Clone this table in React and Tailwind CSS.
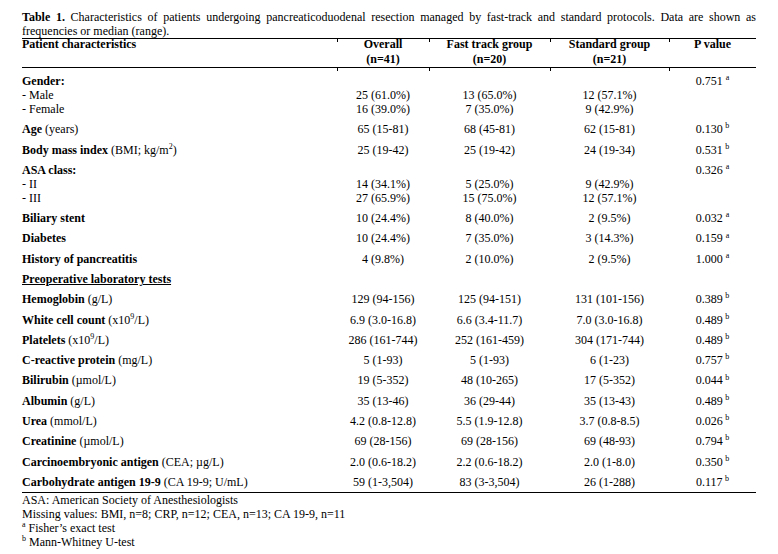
const a = 'a'
const b = 'b'

const Sup = ({ children }) => <sup className="text-[8px] -top-[0.6em]">{children}</sup>

const rows = [
  {
    label: [<b key="l">Gender:</b>, '- Male', '- Female'],
    overall: ['', '25 (61.0%)', '16 (39.0%)'],
    fast: ['', '13 (65.0%)', '7 (35.0%)'],
    std: ['', '12 (57.1%)', '9 (42.9%)'],
    p: ['0.751', a],
    ticks: true,
  },
  { label: [<><b>Age</b> (years)</>], overall: ['65 (15-81)'], fast: ['68 (45-81)'], std: ['62 (15-81)'], p: ['0.130', b] },
  {
    label: [<><b>Body mass index</b> (BMI; kg/m<Sup>2</Sup>)</>],
    overall: ['25 (19-42)'], fast: ['25 (19-42)'], std: ['24 (19-34)'], p: ['0.531', b],
  },
  {
    label: [<b key="l">ASA class:</b>, '- II', '- III'],
    overall: ['', '14 (34.1%)', '27 (65.9%)'],
    fast: ['', '5 (25.0%)', '15 (75.0%)'],
    std: ['', '9 (42.9%)', '12 (57.1%)'],
    p: ['0.326', a],
  },
  { label: [<b key="l">Biliary stent</b>], overall: ['10 (24.4%)'], fast: ['8 (40.0%)'], std: ['2 (9.5%)'], p: ['0.032', a] },
  { label: [<b key="l">Diabetes</b>], overall: ['10 (24.4%)'], fast: ['7 (35.0%)'], std: ['3 (14.3%)'], p: ['0.159', a] },
  { label: [<b key="l">History of pancreatitis</b>], overall: ['4 (9.8%)'], fast: ['2 (10.0%)'], std: ['2 (9.5%)'], p: ['1.000', a] },
  { label: [<b key="l" className="underline">Preoperative laboratory tests</b>], overall: [''], fast: [''], std: [''], p: null },
  { label: [<><b>Hemoglobin</b> (g/L)</>], overall: ['129 (94-156)'], fast: ['125 (94-151)'], std: ['131 (101-156)'], p: ['0.389', b] },
  {
    label: [<><b>White cell count</b> (x10<Sup>9</Sup>/L)</>],
    overall: ['6.9 (3.0-16.8)'], fast: ['6.6 (3.4-11.7)'], std: ['7.0 (3.0-16.8)'], p: ['0.489', b],
  },
  {
    label: [<><b>Platelets</b> (x10<Sup>9</Sup>/L)</>],
    overall: ['286 (161-744)'], fast: ['252 (161-459)'], std: ['304 (171-744)'], p: ['0.489', b],
  },
  { label: [<><b>C-reactive protein</b> (mg/L)</>], overall: ['5 (1-93)'], fast: ['5 (1-93)'], std: ['6 (1-23)'], p: ['0.757', b] },
  { label: [<><b>Bilirubin</b> (µmol/L)</>], overall: ['19 (5-352)'], fast: ['48 (10-265)'], std: ['17 (5-352)'], p: ['0.044', b] },
  { label: [<><b>Albumin</b> (g/L)</>], overall: ['35 (13-46)'], fast: ['36 (29-44)'], std: ['35 (13-43)'], p: ['0.489', b] },
  { label: [<><b>Urea</b> (mmol/L)</>], overall: ['4.2 (0.8-12.8)'], fast: ['5.5 (1.9-12.8)'], std: ['3.7 (0.8-8.5)'], p: ['0.026', b] },
  { label: [<><b>Creatinine</b> (µmol/L)</>], overall: ['69 (28-156)'], fast: ['69 (28-156)'], std: ['69 (48-93)'], p: ['0.794', b] },
  {
    label: [<><b>Carcinoembryonic antigen</b> (CEA; µg/L)</>],
    overall: ['2.0 (0.6-18.2)'], fast: ['2.2 (0.6-18.2)'], std: ['2.0 (1-8.0)'], p: ['0.350', b],
  },
  {
    label: [<><b>Carbohydrate antigen 19-9</b> (CA 19-9; U/mL)</>],
    overall: ['59 (1-3,504)'], fast: ['83 (3-3,504)'], std: ['26 (1-288)'], p: ['0.117', b],
    last: true,
  },
]

function Tick() {
  return <span className="absolute left-0 top-0 h-[3px] w-px bg-black" />
}

function Lines({ items }) {
  return items.map((t, i) => (
    <div key={i} className="h-[14px] whitespace-nowrap">{t}</div>
  ))
}

function PValue({ p }) {
  if (!p) return null
  const [v, mark] = p
  return (
    <div className="h-[14px] whitespace-nowrap">
      {v}
      {mark === 'a' ? ' ' : '\u2009'}
      <Sup>{mark}</Sup>
    </div>
  )
}

export default function App() {
  return (
    <div className="min-h-screen bg-white text-black pl-[22px] pt-[10px]"
      style={{ fontFamily: '"Liberation Serif", "Times New Roman", serif' }}>
      <div className="w-[734px] text-[12px] leading-[14px]">
        <div className="text-justify [text-align-last:justify] whitespace-nowrap">
          <b>Table 1.</b> Characteristics of patients undergoing pancreaticoduodenal resection managed by fast-track and standard protocols. Data are shown as
        </div>
        <div>frequencies or median (range).</div>

        <table className="w-[734px] table-fixed border-collapse border-t border-b border-black">
          <colgroup>
            <col className="w-[315px]" />
            <col className="w-[92px]" />
            <col className="w-[121px]" />
            <col className="w-[119px]" />
            <col className="w-[87px]" />
          </colgroup>
          <thead>
            <tr className="border-b border-black font-bold">
              <th className="text-left align-top font-bold">
                <div className="-mt-[2px] leading-[15px] h-[30px]">Patient characteristics</div>
              </th>
              {[['Overall', '(n=41)'], ['Fast track group', '(n=20)'], ['Standard group', '(n=21)'], ['P value', '']].map(([t, n]) => (
                <th key={t} className="relative align-top font-bold text-center">
                  <Tick />
                  <div className="-mt-[2px] leading-[15px] h-[30px]">
                    <div>{t}</div>
                    <div>{n}</div>
                  </div>
                </th>
              ))}
            </tr>
          </thead>
          <tbody>
            {rows.map((r, i) => {
              const pad = `${i === 0 ? 'pt-[6px]' : 'pt-[3.2px]'} ${r.last ? 'pb-[3.5px]' : 'pb-[3.1px]'}`
              return (
                <tr key={i}>
                  <td className={`align-top text-left ${pad}`}>
                    <Lines items={r.label} />
                  </td>
                  {[r.overall, r.fast, r.std].map((v, j) => (
                    <td key={j} className={`relative align-top text-center ${pad}`}>
                      {r.ticks && <Tick />}
                      <Lines items={v} />
                    </td>
                  ))}
                  <td className={`relative align-top text-center ${pad}`}>
                    {r.ticks && <Tick />}
                    <PValue p={r.p} />
                  </td>
                </tr>
              )
            })}
          </tbody>
        </table>

        <div className="leading-[14px]">
          <div>ASA: American Society of Anesthesiologists</div>
          <div>Missing values: BMI, n=8; CRP, n=12; CEA, n=13; CA 19-9, n=11</div>
          <div><Sup>a</Sup> Fisher’s exact test</div>
          <div><Sup>b</Sup> Mann-Whitney U-test</div>
        </div>
      </div>
    </div>
  )
}
